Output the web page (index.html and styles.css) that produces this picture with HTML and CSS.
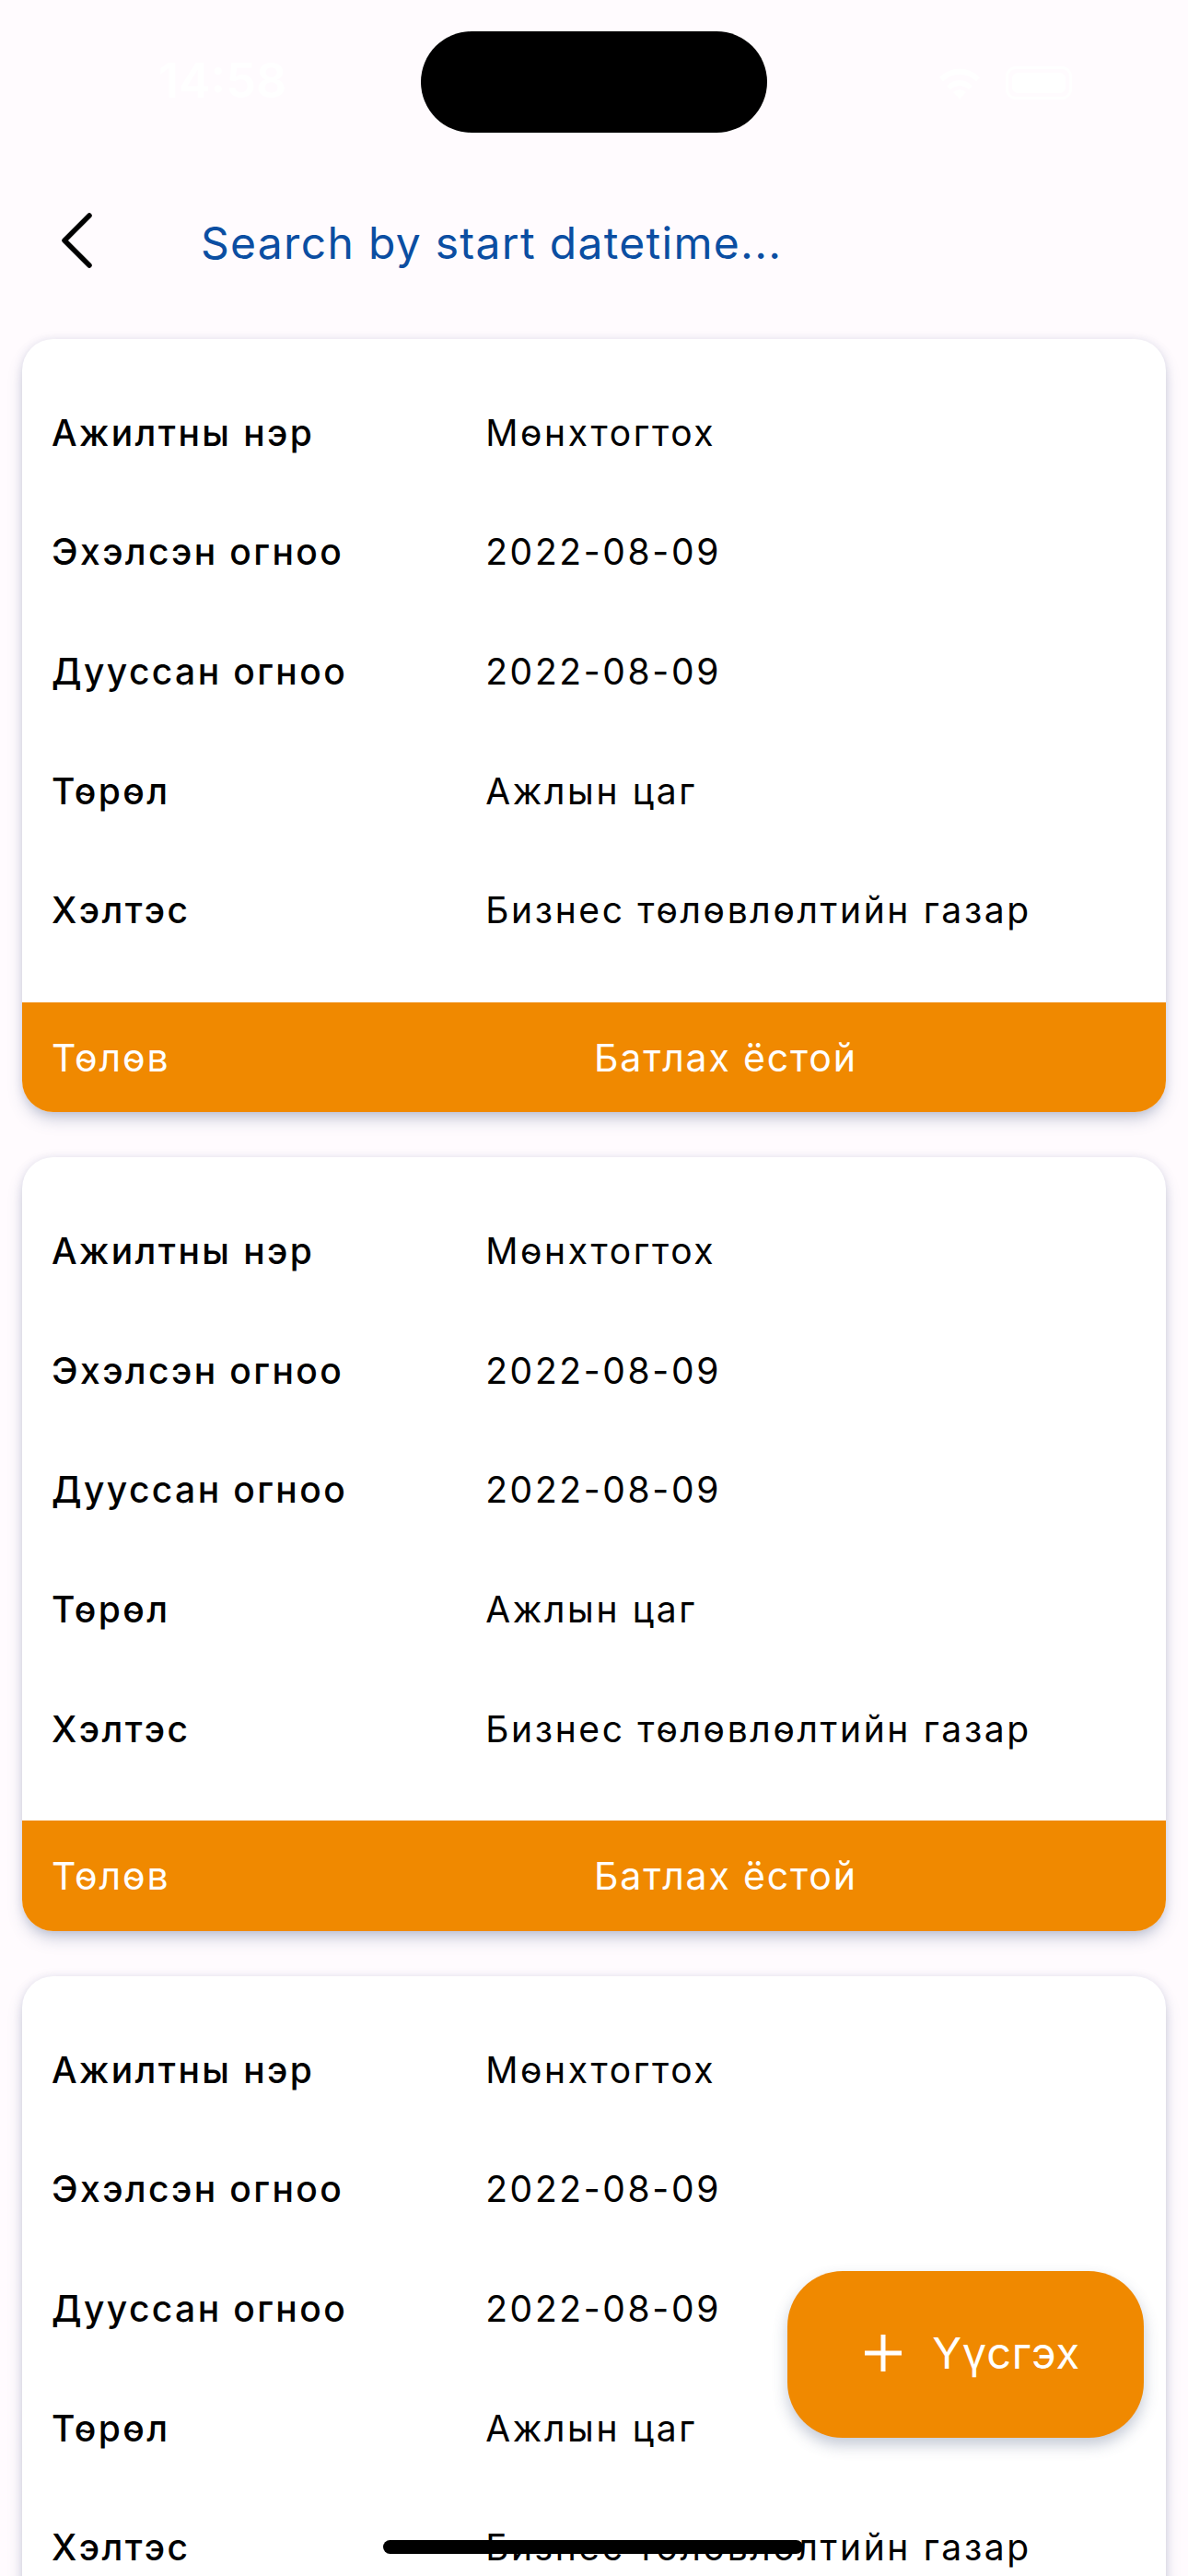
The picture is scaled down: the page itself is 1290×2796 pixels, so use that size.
FILE: index.html
```html
<!DOCTYPE html>
<html lang="mn">
<head>
<meta charset="utf-8">
<title>Search</title>
<link rel="stylesheet" href="styles.css">
</head>
<body>
<div class="screen">
  <div class="status">
    <span class="time">14:58</span>
    <div class="status-icons">
      <svg class="wifi" width="56" height="40" viewBox="0 0 56 40"><path d="M28 38l-7-8a10 10 0 0 1 14 0z M14 23a20 20 0 0 1 28 0l-4 4.5a14 14 0 0 0-20 0z M6 14a31 31 0 0 1 44 0l-4 4.5a25 25 0 0 0-36 0z" fill="#fff"/></svg>
      <div class="battery"><div class="battery-fill"></div></div>
    </div>
    <div class="island"></div>
  </div>
  <div class="appbar">
    <svg class="back" width="36" height="60" viewBox="0 0 36 60"><path d="M32 3 L5 30 L32 57" fill="none" stroke="#000" stroke-width="5.5" stroke-linecap="round" stroke-linejoin="round"/></svg>
    <span class="search">Search by start datetime...</span>
  </div>
  <div class="list">
    <div class="card">
      <div class="card-body">
        <div class="row"><span class="label">Ажилтны нэр</span><span class="value">Мөнхтогтох</span></div>
        <div class="row"><span class="label">Эхэлсэн огноо</span><span class="value">2022-08-09</span></div>
        <div class="row"><span class="label">Дууссан огноо</span><span class="value">2022-08-09</span></div>
        <div class="row"><span class="label">Төрөл</span><span class="value">Ажлын цаг</span></div>
        <div class="row"><span class="label">Хэлтэс</span><span class="value">Бизнес төлөвлөлтийн газар</span></div>
      </div>
      <div class="card-foot"><span class="foot-label">Төлөв</span><span class="foot-value">Батлах ёстой</span></div>
    </div>
    <div class="card">
      <div class="card-body">
        <div class="row"><span class="label">Ажилтны нэр</span><span class="value">Мөнхтогтох</span></div>
        <div class="row"><span class="label">Эхэлсэн огноо</span><span class="value">2022-08-09</span></div>
        <div class="row"><span class="label">Дууссан огноо</span><span class="value">2022-08-09</span></div>
        <div class="row"><span class="label">Төрөл</span><span class="value">Ажлын цаг</span></div>
        <div class="row"><span class="label">Хэлтэс</span><span class="value">Бизнес төлөвлөлтийн газар</span></div>
      </div>
      <div class="card-foot"><span class="foot-label">Төлөв</span><span class="foot-value">Батлах ёстой</span></div>
    </div>
    <div class="card">
      <div class="card-body">
        <div class="row"><span class="label">Ажилтны нэр</span><span class="value">Мөнхтогтох</span></div>
        <div class="row"><span class="label">Эхэлсэн огноо</span><span class="value">2022-08-09</span></div>
        <div class="row"><span class="label">Дууссан огноо</span><span class="value">2022-08-09</span></div>
        <div class="row"><span class="label">Төрөл</span><span class="value">Ажлын цаг</span></div>
        <div class="row"><span class="label">Хэлтэс</span><span class="value">Бизнес төлөвлөлтийн газар</span></div>
      </div>
      <div class="card-foot"><span class="foot-label">Төлөв</span><span class="foot-value">Батлах ёстой</span></div>
    </div>
  </div>
  <button class="fab"><svg class="plus" width="42" height="42" viewBox="0 0 42 42"><path d="M21 1v40M1 21h40" stroke="#fff" stroke-width="5"/></svg><span>Үүсгэх</span></button>
  <div class="home-indicator"></div>
</div>
</body>
</html>
```
FILE: styles.css
```css
* { box-sizing: border-box; }
html, body { margin: 0; padding: 0; }
body {
  background: #fffbfe;
  font-family: Inter, "Noto Sans", sans-serif;
  color: #000;
}
.screen {
  position: relative;
  width: 1290px;
  height: 2796px;
  overflow: hidden;
  background: #fffbfe;
}
.status {
  position: relative;
  height: 176px;
  display: flex;
  align-items: flex-start;
  justify-content: space-between;
  padding: 62px 126px 0 172px;
}
.time {
  color: #fff;
  font-size: 52px;
  font-weight: 600;
  line-height: 52px;
}
.status-icons {
  display: flex;
  align-items: center;
  gap: 22px;
  padding-top: 8px;
}
.battery {
  width: 72px;
  height: 36px;
  border: 3px solid #fff;
  border-radius: 11px;
  padding: 4px;
}
.battery-fill { width: 100%; height: 100%; background: #fff; border-radius: 6px; }
.island {
  position: absolute;
  left: 457px;
  top: 34px;
  width: 376px;
  height: 110px;
  border-radius: 55px;
  background: #000;
}
.appbar {
  height: 170px;
  display: flex;
  align-items: center;
  padding-left: 65px;
  padding-top: 4px;
}
.back { display: block; margin-right: 117px; margin-top: -4px; }
.search {
  color: #0b4ea2;
  font-size: 48px;
  letter-spacing: 1.3px;
}
.list {
  display: flex;
  flex-direction: column;
  gap: 49px;
  padding: 22px 24px 0;
}
.card {
  background: #fff;
  border-radius: 34px;
  overflow: hidden;
  box-shadow: 0 10px 18px -4px rgba(70, 90, 130, 0.35), 0 0 10px rgba(120, 130, 170, 0.18);
}
.card-body {
  padding: 36px 32px;
}
.row {
  height: 129.6px;
  display: grid;
  grid-template-columns: 2fr 3fr;
  align-items: center;
  padding-top: 1px;
  font-size: 39px;
  letter-spacing: 2.65px;
}
.label { font-weight: 500; letter-spacing: 2.4px; }
.value { font-weight: 400; }
.card-foot {
  height: 119.5px;
  background: #f08900;
  display: grid;
  grid-template-columns: 1fr 1fr;
  align-items: center;
  padding: 0 32px;
  color: #fff;
  font-size: 41px;
  letter-spacing: 1.85px;
}
.fab {
  position: absolute;
  right: 48px;
  bottom: 150px;
  width: 387px;
  height: 181px;
  border: none;
  border-radius: 60px;
  background: #f08900;
  color: #fff;
  display: flex;
  align-items: center;
  justify-content: center;
  gap: 32px;
  font-family: Inter, "Noto Sans", sans-serif;
  font-size: 47px;
  letter-spacing: 0.8px;
  box-shadow: 0 8px 16px rgba(60, 80, 120, 0.3);
  padding: 0 0 4px 14px;
}
.plus { display: block; }
.home-indicator {
  position: absolute;
  left: 416px;
  bottom: 24px;
  width: 456px;
  height: 15px;
  border-radius: 8px;
  background: #000;
}
```
